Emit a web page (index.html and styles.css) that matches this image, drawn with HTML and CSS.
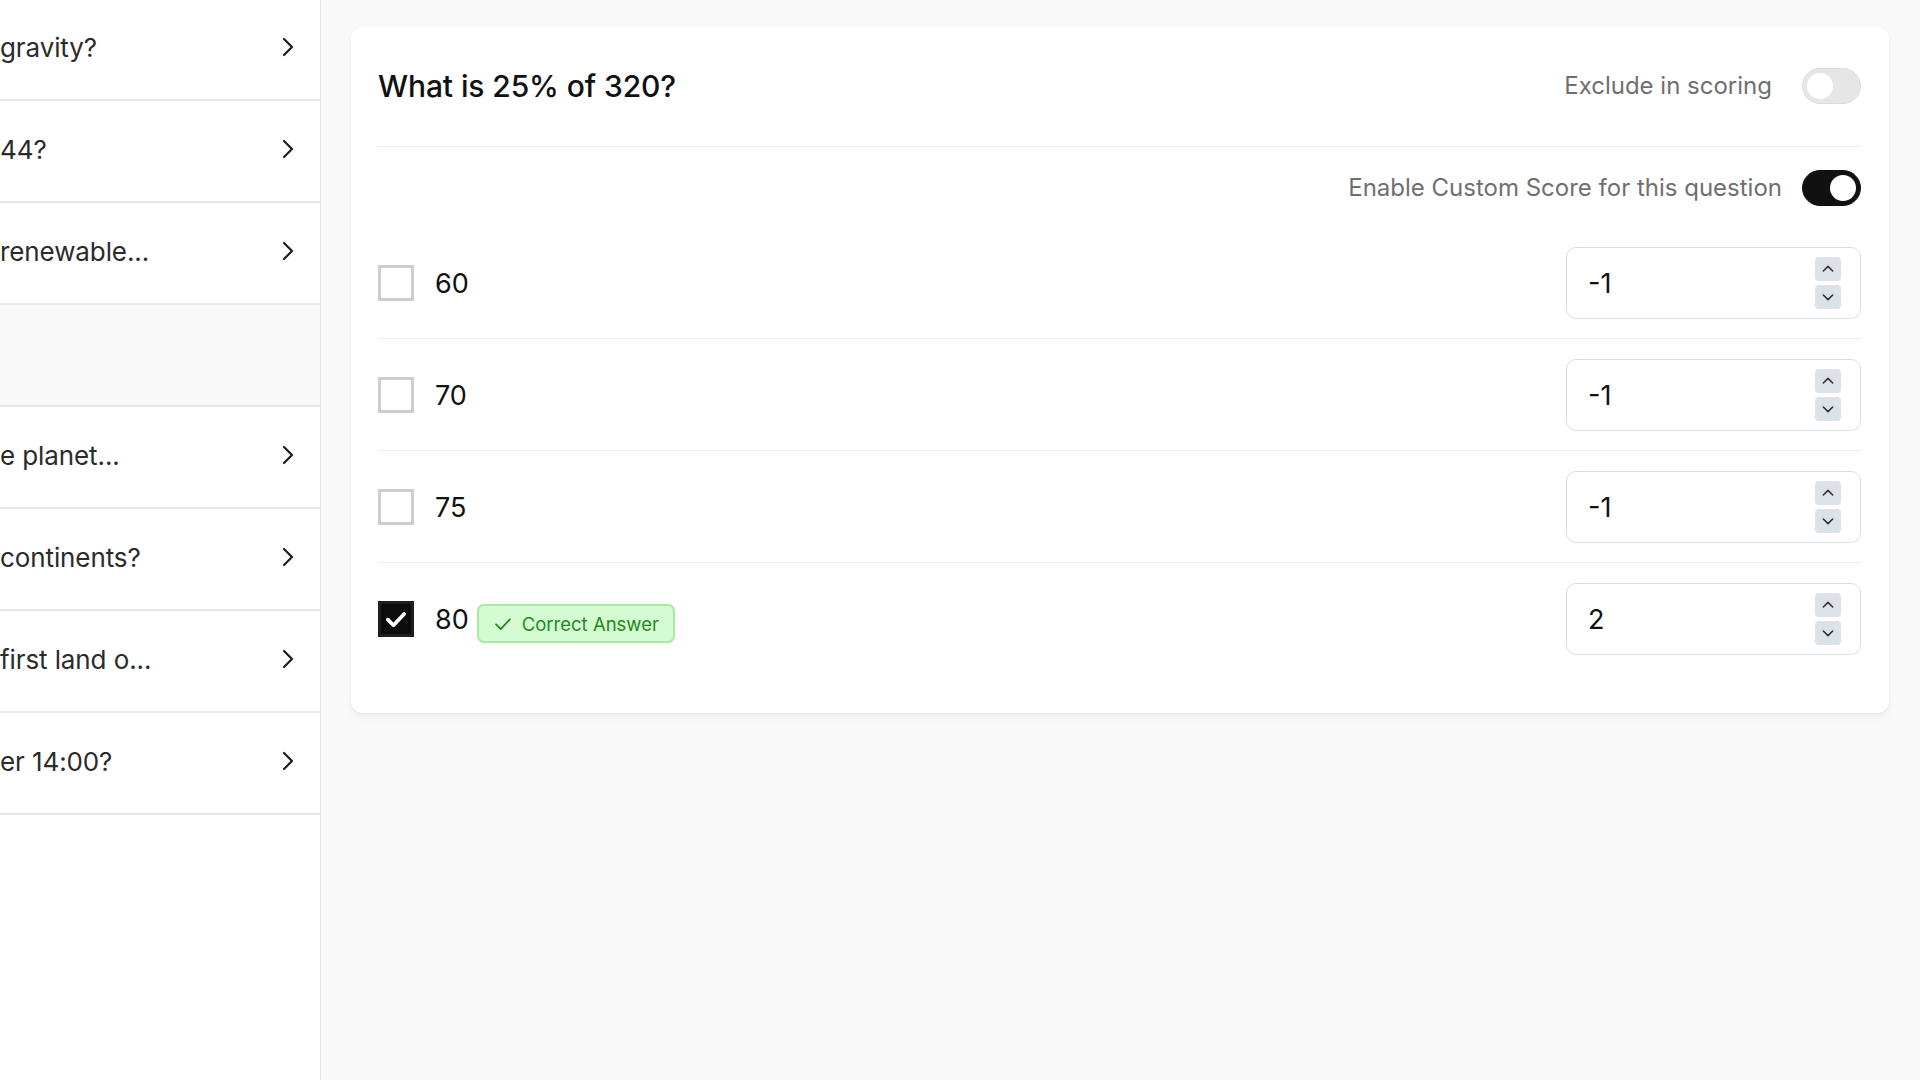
FILE: index.html
```html
<!DOCTYPE html>
<html lang="en">
<head>
<meta charset="utf-8">
<title>Question scoring</title>
<link rel="stylesheet" href="styles.css">
</head>
<body>
<div class="layout">
  <aside class="sidebar">
    <ul class="q-list">
      <li class="q-item"><span class="q-text">gravity?</span><svg class="chev" viewBox="0 0 24 24"><path d="M9 6l6 6-6 6"/></svg></li>
      <li class="q-item"><span class="q-text">44?</span><svg class="chev" viewBox="0 0 24 24"><path d="M9 6l6 6-6 6"/></svg></li>
      <li class="q-item"><span class="q-text">renewable...</span><svg class="chev" viewBox="0 0 24 24"><path d="M9 6l6 6-6 6"/></svg></li>
      <li class="q-item active"></li>
      <li class="q-item"><span class="q-text">e planet...</span><svg class="chev" viewBox="0 0 24 24"><path d="M9 6l6 6-6 6"/></svg></li>
      <li class="q-item"><span class="q-text">continents?</span><svg class="chev" viewBox="0 0 24 24"><path d="M9 6l6 6-6 6"/></svg></li>
      <li class="q-item"><span class="q-text">first land o...</span><svg class="chev" viewBox="0 0 24 24"><path d="M9 6l6 6-6 6"/></svg></li>
      <li class="q-item"><span class="q-text">er 14:00?</span><svg class="chev" viewBox="0 0 24 24"><path d="M9 6l6 6-6 6"/></svg></li>
    </ul>
  </aside>

  <main class="main">
    <section class="card">
      <header class="card-head">
        <h1 class="title">What is 25% of 320?</h1>
        <label class="switch-row">
          <span class="switch-label">Exclude in scoring</span>
          <span class="switch"><span class="knob"></span></span>
        </label>
      </header>

      <div class="custom-row">
        <label class="switch-row tight">
          <span class="switch-label">Enable Custom Score for this question</span>
          <span class="switch on"><span class="knob"></span></span>
        </label>
      </div>

      <div class="options">
        <div class="option">
          <div class="opt-left">
            <span class="box"></span>
            <span class="opt-text">60</span>
          </div>
          <div class="num-input">
            <span class="num-value">-1</span>
            <div class="spin">
              <span class="spin-btn"><svg viewBox="0 0 12 12"><path d="M2.5 7.5L6 4l3.5 3.5"/></svg></span>
              <span class="spin-btn"><svg viewBox="0 0 12 12"><path d="M2.5 4.5L6 8l3.5-3.5"/></svg></span>
            </div>
          </div>
        </div>

        <div class="option">
          <div class="opt-left">
            <span class="box"></span>
            <span class="opt-text">70</span>
          </div>
          <div class="num-input">
            <span class="num-value">-1</span>
            <div class="spin">
              <span class="spin-btn"><svg viewBox="0 0 12 12"><path d="M2.5 7.5L6 4l3.5 3.5"/></svg></span>
              <span class="spin-btn"><svg viewBox="0 0 12 12"><path d="M2.5 4.5L6 8l3.5-3.5"/></svg></span>
            </div>
          </div>
        </div>

        <div class="option">
          <div class="opt-left">
            <span class="box"></span>
            <span class="opt-text">75</span>
          </div>
          <div class="num-input">
            <span class="num-value">-1</span>
            <div class="spin">
              <span class="spin-btn"><svg viewBox="0 0 12 12"><path d="M2.5 7.5L6 4l3.5 3.5"/></svg></span>
              <span class="spin-btn"><svg viewBox="0 0 12 12"><path d="M2.5 4.5L6 8l3.5-3.5"/></svg></span>
            </div>
          </div>
        </div>

        <div class="option">
          <div class="opt-left">
            <span class="box checked"><svg viewBox="0 0 24 24"><path d="M5.5 12.5l4.5 4.5 8.5-9"/></svg></span>
            <span class="opt-text">80</span>
            <span class="badge"><svg viewBox="0 0 24 24"><path d="M4.5 12.5l5 5 10-10.5"/></svg>Correct Answer</span>
          </div>
          <div class="num-input">
            <span class="num-value">2</span>
            <div class="spin">
              <span class="spin-btn"><svg viewBox="0 0 12 12"><path d="M2.5 7.5L6 4l3.5 3.5"/></svg></span>
              <span class="spin-btn"><svg viewBox="0 0 12 12"><path d="M2.5 4.5L6 8l3.5-3.5"/></svg></span>
            </div>
          </div>
        </div>
      </div>
    </section>
  </main>
</div>
</body>
</html>
```

FILE: styles.css
```css
* {
  box-sizing: border-box;
}

html, body {
  margin: 0;
  padding: 0;
}

body {
  font-family: Inter, "Noto Sans", "Liberation Sans", sans-serif;
  background: #f9f9f9;
  color: #111;
  width: 1920px;
  height: 1080px;
  overflow: hidden;
}

.layout {
  display: flex;
  height: 1080px;
}

/* left question list */
.sidebar {
  width: 321px;
  flex: none;
  background: #fff;
  border-right: 1px solid #e1e5ea;
  overflow: hidden;
}

.q-list {
  list-style: none;
  margin: -1px 0 0;
  padding: 0;
}

.q-item {
  height: 102px;
  border-bottom: 2px solid #e7e7e7;
  display: flex;
  align-items: center;
  justify-content: space-between;
  padding: 0 16px 4px 0;
  background: #fff;
}

.q-item.active {
  background: #f9f9f9;
}

.q-text {
  font-size: 26px;
  color: #2b2b2b;
  white-space: nowrap;
  letter-spacing: -0.1px;
}

.chev {
  width: 32px;
  height: 32px;
  fill: none;
  stroke: #1a1a1a;
  stroke-width: 1.6;
  stroke-linecap: round;
  stroke-linejoin: round;
}

/* main area */
.main {
  flex: 1;
  padding: 27px 31px 0 30px;
}

.card {
  background: #fff;
  border-radius: 12px;
  padding: 0 28px 39px 27px;
  box-shadow: 0 5px 6px rgba(0, 0, 0, 0.045), 0 1px 2px rgba(0, 0, 0, 0.04);
}

.card-head {
  display: flex;
  align-items: center;
  justify-content: space-between;
  padding: 41px 0 42px;
  border-bottom: 1px solid #ebebeb;
}

.title {
  margin: 0;
  font-size: 30px;
  font-weight: 500;
  line-height: 36px;
  color: #111;
  letter-spacing: -0.1px;
}

.switch-row {
  display: flex;
  align-items: center;
  gap: 30px;
}

.switch-row.tight {
  gap: 20px;
}

.switch-label {
  font-size: 24px;
  color: #6f6f6f;
  line-height: 36px;
}

.switch {
  width: 59px;
  height: 36px;
  border-radius: 18px;
  background: #e6e6e6;
  border: 1px solid #dcdcdc;
  position: relative;
  display: block;
}

.knob {
  position: absolute;
  top: 4px;
  left: 4px;
  width: 26px;
  height: 26px;
  border-radius: 50%;
  background: #fff;
}

.switch.on {
  background: #111;
  border-color: #111;
}

.switch.on .knob {
  left: auto;
  right: 4px;
}

.custom-row {
  display: flex;
  justify-content: flex-end;
  padding: 23px 0 21px;
}

/* answer options */
.option {
  display: flex;
  align-items: center;
  justify-content: space-between;
  padding: 20px 0 19px;
  border-bottom: 1px solid #ededed;
}

.option:last-child {
  border-bottom: none;
}

.opt-left {
  display: flex;
  align-items: center;
}

.box {
  width: 36px;
  height: 36px;
  border: 3px solid #cdcdcd;
  background: #fff;
  display: flex;
  align-items: center;
  justify-content: center;
  flex: none;
}

.box.checked {
  background: #0c0c0c;
  border-color: #1e1e1e;
}

.box svg {
  width: 30px;
  height: 30px;
  fill: none;
  stroke: #fff;
  stroke-width: 3;
  stroke-linecap: round;
  stroke-linejoin: round;
}

.opt-text {
  font-size: 27px;
  margin-left: 21px;
  color: #111;
}

.badge {
  display: flex;
  align-items: center;
  gap: 8px;
  height: 39px;
  margin: 9px 0 0 8px;
  padding: 0 14px 0 13px;
  background: #d5fbd2;
  border: 2px solid #a5eca1;
  border-radius: 7px;
  color: #1f8a1d;
  font-size: 18.5px;
}

.badge svg {
  width: 22px;
  height: 22px;
  fill: none;
  stroke: #1f8a1d;
  stroke-width: 2;
  stroke-linecap: round;
  stroke-linejoin: round;
}

.num-input {
  width: 295px;
  height: 72px;
  border: 1px solid #d7dde5;
  border-radius: 10px;
  display: flex;
  align-items: center;
  justify-content: space-between;
  padding: 0 19px 0 21px;
}

.num-value {
  font-size: 27px;
  color: #111;
}

.spin {
  display: flex;
  flex-direction: column;
  gap: 4px;
}

.spin-btn {
  width: 26px;
  height: 24px;
  border-radius: 4px;
  background: #dce2e9;
  display: flex;
  align-items: center;
  justify-content: center;
}

.spin-btn svg {
  width: 16px;
  height: 16px;
  fill: none;
  stroke: #333;
  stroke-width: 1.2;
  stroke-linecap: round;
  stroke-linejoin: round;
}
```
